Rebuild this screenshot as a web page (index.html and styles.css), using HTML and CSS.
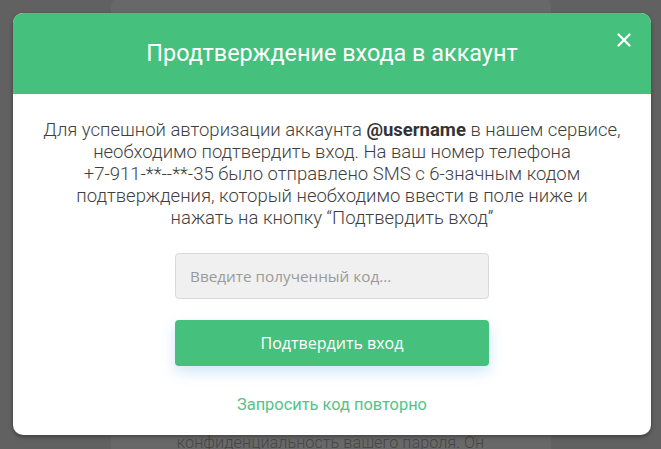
FILE: index.html
```html
<!DOCTYPE html>
<html lang="ru">
<head>
<meta charset="utf-8">
<title>Подтверждение входа</title>
<link rel="stylesheet" href="styles.css">
</head>
<body>
<div class="page">
  <div class="page-card">
    <p class="page-text">конфиденциальность вашего пароля. Он</p>
  </div>
</div>
<div class="modal">
  <div class="modal-header">
    <h1 class="modal-title">Продтверждение входа в аккаунт</h1>
    <button class="modal-close" aria-label="Закрыть">
      <svg width="14" height="14" viewBox="0 0 14 14"><path d="M1.5 1.5L12.5 12.5M12.5 1.5L1.5 12.5" stroke="#fff" stroke-width="2.2" stroke-linecap="round"/></svg>
    </button>
  </div>
  <div class="modal-body">
    <p class="modal-text">Для успешной авторизации аккаунта <b>@username</b> в нашем сервисе,<br>необходимо подтвердить вход. На ваш номер телефона<br>+7-911-**--**-35 было отправлено SMS с 6-значным кодом<br>подтверждения, который необходимо ввести в поле ниже и<br>нажать на кнопку “Подтвердить вход”</p>
    <input class="code-input" type="text" placeholder="Введите полученный код...">
    <button class="confirm-btn">Подтвердить вход</button>
    <a class="resend-link" href="#">Запросить код повторно</a>
  </div>
</div>
</body>
</html>
```
FILE: styles.css
```css
html, body {
  margin: 0;
  padding: 0;
}
body {
  background: #616161;
  width: 661px;
  height: 449px;
  overflow: hidden;
  font-family: Roboto, "Noto Sans", sans-serif;
}
.page {
  display: flex;
  justify-content: center;
}
.page-card {
  margin-top: -6px;
  width: 440px;
  height: 455px;
  background: #686868;
  border-radius: 14px 14px 0 0;
  padding-top: 439px;
  box-sizing: border-box;
  overflow: hidden;
}
.page-text {
  margin: 0;
  text-align: center;
  color: #464646;
  font-size: 16.3px;
  font-weight: 300;
  line-height: 20px;
}
.modal {
  position: absolute;
  left: 13px;
  top: 13px;
  width: 638px;
  height: 422px;
  background: #fff;
  border-radius: 10px;
  overflow: hidden;
  box-shadow: 0 2px 4px rgba(0,0,0,0.35);
  display: flex;
  flex-direction: column;
}
.modal-header {
  position: relative;
  height: 81px;
  background: #45c17d;
  display: flex;
  align-items: center;
  justify-content: center;
}
.modal-title {
  margin: 0 0 1px;
  color: #fff;
  font-size: 23.4px;
  font-weight: 400;
}
.modal-close {
  position: absolute;
  right: 17px;
  top: 17px;
  width: 20px;
  height: 20px;
  padding: 0;
  border: 0;
  background: none;
  display: flex;
  align-items: center;
  justify-content: center;
}
.modal-body {
  display: flex;
  flex-direction: column;
  align-items: center;
  padding-top: 25px;
}
.modal-text {
  margin: 0;
  text-align: center;
  color: #3f3f3f;
  font-size: 18.5px;
  font-weight: 300;
  line-height: 22px;
}
.modal-text b {
  font-weight: 700;
  color: #333;
}
.code-input {
  margin-top: 24px;
  box-sizing: border-box;
  width: 314px;
  height: 46px;
  padding: 0 14px;
  background: #f0f0f0;
  border: 1px solid #d9d9d9;
  border-radius: 4px;
  font-family: "Open Sans", sans-serif;
  font-size: 15.3px;
  color: #555;
  outline: none;
}
.code-input::placeholder {
  color: #9a9a9a;
}
.confirm-btn {
  margin-top: 21px;
  width: 314px;
  height: 46px;
  border: 0;
  border-radius: 4px;
  background: #45c17d;
  color: #fff;
  font-family: "Open Sans", sans-serif;
  font-size: 16px;
  box-shadow: 0 6px 14px rgba(150, 200, 240, 0.45);
}
.resend-link {
  margin-top: 29px;
  color: #55c389;
  font-size: 16.4px;
  line-height: 20px;
  text-decoration: none;
}
```
